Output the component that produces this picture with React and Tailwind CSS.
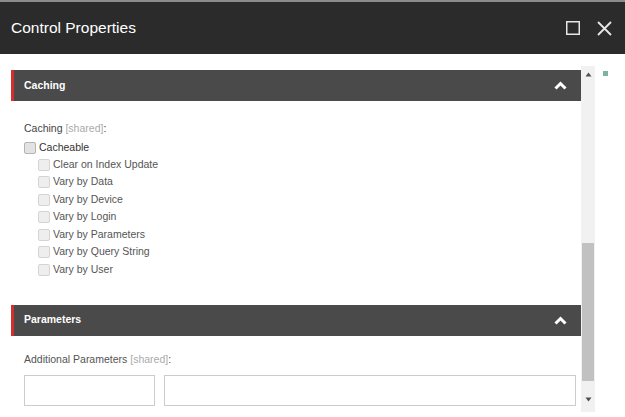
import React from 'react'

const SUB_ITEMS = [
  'Clear on Index Update',
  'Vary by Data',
  'Vary by Device',
  'Vary by Login',
  'Vary by Parameters',
  'Vary by Query String',
  'Vary by User',
]

function Chevron() {
  return (
    <svg width="13" height="9" viewBox="0 0 13 9" className="block">
      <polyline points="1.5,7.5 6.5,2.5 11.5,7.5" fill="none" stroke="#fff" strokeWidth="3" strokeLinejoin="miter" />
    </svg>
  )
}

function SectionHeader({ title }) {
  return (
    <div className="h-[31px] bg-[#4a4a4a] border-l-[3px] border-[#d42f2e] flex items-center justify-between pl-[10px] pr-[14px]">
      <span className="text-[10.5px] font-bold text-white">{title}</span>
      <Chevron />
    </div>
  )
}

function Box({ strong }) {
  return (
    <span
      className={`inline-block w-[12px] h-[12px] rounded-[2px] border ${
        strong ? 'bg-[#e2e2e2] border-[#b5b5b5]' : 'bg-[#eeeeee] border-[#d4d4d4]'
      }`}
    />
  )
}

export default function App() {
  return (
    <div className="w-[625px] h-[417px] bg-white overflow-hidden font-['Liberation_Sans',Arial,sans-serif]">
      <div className="h-[2px] bg-[#8c8c8c]" />
      <div className="h-[52px] bg-[#2b2b2b] flex items-center justify-between pl-[11px] pr-[13px]">
        <span className="text-[15.5px] text-white">Control Properties</span>
        <div className="flex items-center gap-[17px]">
          <svg width="14" height="14" viewBox="0 0 14 14">
            <rect x="0.75" y="0.75" width="12.5" height="12.5" fill="none" stroke="#e6e6e6" strokeWidth="1.5" />
          </svg>
          <svg width="15" height="15" viewBox="0 0 15 15">
            <path d="M1 1 L14 14 M14 1 L1 14" stroke="#e6e6e6" strokeWidth="1.8" />
          </svg>
        </div>
      </div>

      <div className="flex h-[363px]">
        <div className="w-[581px] pl-[11px] pt-[16px]">
          <SectionHeader title="Caching" />
          <div className="pl-[13px] pt-[20px] text-[10.5px] text-[#444]">
            <div className="h-[14px] leading-[14px]">
              Caching <span className="text-[#aaa]">[shared]</span>:
            </div>
            <div className="mt-[4px] h-[17px] flex items-center gap-[3px]">
              <Box strong />
              <span className="text-[#333]">Cacheable</span>
            </div>
            <div className="pl-[14px]">
              {SUB_ITEMS.map((s) => (
                <div key={s} className="h-[17.5px] flex items-center gap-[3px]">
                  <Box />
                  <span className="text-[#555]">{s}</span>
                </div>
              ))}
            </div>
          </div>

          <div className="mt-[26px]">
            <SectionHeader title="Parameters" />
          </div>
          <div className="pl-[13px] pt-[16px] text-[10.5px] text-[#555]">
            <div className="h-[14px] leading-[14px]">
              Additional Parameters <span className="text-[#aaa]">[shared]</span>:
            </div>
            <div className="mt-[9px] flex gap-[9px]">
              <div className="w-[131px] h-[31px] border border-[#cccccc] bg-white" />
              <div className="w-[412px] h-[31px] border border-[#cccccc] bg-white" />
            </div>
          </div>
        </div>

        <div className="w-[14px] mt-[12px] h-[346px] bg-[#f1f1f1] flex flex-col items-center">
          <svg width="7" height="5" viewBox="0 0 7 5" className="mt-[6px]">
            <polygon points="3.5,0.5 6.5,4.5 0.5,4.5" fill="#505050" />
          </svg>
          <div className="mt-[166px] w-[12px] h-[138px] bg-[#c1c1c1]" />
          <svg width="7" height="5" viewBox="0 0 7 5" className="mt-[16px]">
            <polygon points="0.5,0.5 6.5,0.5 3.5,4.5" fill="#505050" />
          </svg>
        </div>

        <div className="flex-1 pl-[8px] pt-[17px]">
          <div className="w-[5px] h-[5px] bg-[#7fb3a0]" />
        </div>
      </div>
    </div>
  )
}
